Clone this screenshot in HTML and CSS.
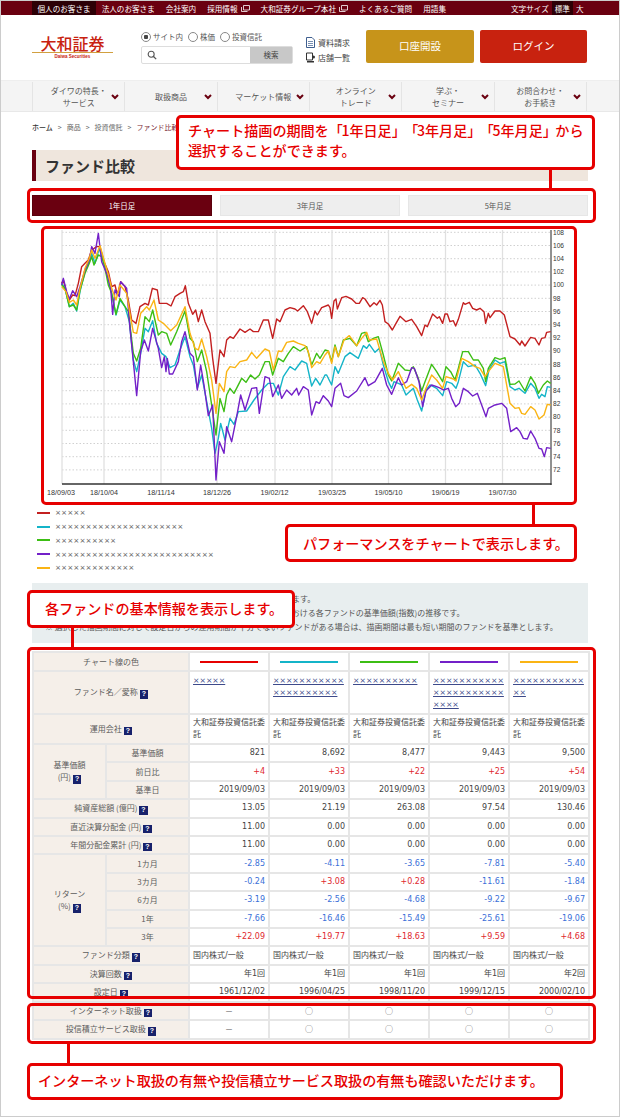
FILE: index.html
```html
<!DOCTYPE html>
<html lang="ja">
<head>
<meta charset="utf-8">
<title>ファンド比較</title>
<link rel="stylesheet" href="styles.css">
</head>
<body>
<div class="page">
  <div class="topbar">
    <span class="tb current">個人のお客さま</span>
    <span class="tb">法人のお客さま</span>
    <span class="tb">会社案内</span>
    <span class="tb">採用情報<svg class="ext" viewBox="0 0 9 7"><path d="M2.5 .5h6v4.500h-6zM.5 2v4.500h6" fill="none" stroke="#fff" stroke-width=".8"/></svg></span>
    <span class="tb">大和証券グループ本社<svg class="ext" viewBox="0 0 9 7"><path d="M2.5 .5h6v4.500h-6zM.5 2v4.500h6" fill="none" stroke="#fff" stroke-width=".8"/></svg></span>
    <span class="tb">よくあるご質問</span>
    <span class="tb">用語集</span>
    <span class="tb size-label">文字サイズ</span>
    <span class="size on">標準</span>
    <span class="size">大</span>
  </div>

  <header class="header">
    <div class="logo">
      <div class="logo-jp">大和証券</div>
      <div class="logo-en">Daiwa Securities</div>
    </div>
    <div class="search">
      <div class="radios">
        <span class="radio sel">サイト内</span>
        <span class="radio">株価</span>
        <span class="radio">投資信託</span>
      </div>
      <div class="searchbox">
        <svg class="glass" viewBox="0 0 12 12"><circle cx="5" cy="5" r="3.600" fill="none" stroke="#555" stroke-width="1.300"/><path d="M7.800 7.800L11 11" stroke="#555" stroke-width="1.500"/></svg>
        <span class="searchbtn">検索</span>
      </div>
    </div>
    <div class="hlinks">
      <div class="hlink"><svg class="hicon" viewBox="0 0 9 11"><path d="M.5 .5h5.500l2.500 2.500v7.500h-8z" fill="#fff" stroke="#3f5f8f"/><path d="M2 4.500h5M2 6.500h5M2 8.500h5" stroke="#3f5f8f" stroke-width=".7"/></svg>資料請求</div>
      <div class="hlink"><svg class="hicon" viewBox="0 0 9 11"><path d="M.5 1h6v7h-6z" fill="#fff" stroke="#333"/><circle cx="7.500" cy="5" r="1.500" fill="#333"/><path d="M1 9h7v1.500h-7z" fill="#333"/></svg>店舗一覧</div>
    </div>
    <div class="hbtn gold">口座開設</div>
    <div class="hbtn red">ログイン</div>
  </header>

  <nav class="nav">
    <div class="navitem"><span class="navtext">ダイワの特長・<br>サービス</span><svg class="chev" viewBox="0 0 8 6"><path d="M1 1l3 3 3-3" fill="none" stroke="#6a0010" stroke-width="2"/></svg></div>
    <div class="navitem"><span class="navtext">取扱商品</span><svg class="chev" viewBox="0 0 8 6"><path d="M1 1l3 3 3-3" fill="none" stroke="#6a0010" stroke-width="2"/></svg></div>
    <div class="navitem"><span class="navtext">マーケット情報</span><svg class="chev" viewBox="0 0 8 6"><path d="M1 1l3 3 3-3" fill="none" stroke="#6a0010" stroke-width="2"/></svg></div>
    <div class="navitem"><span class="navtext">オンライン<br>トレード</span><svg class="chev" viewBox="0 0 8 6"><path d="M1 1l3 3 3-3" fill="none" stroke="#6a0010" stroke-width="2"/></svg></div>
    <div class="navitem"><span class="navtext">学ぶ・<br>セミナー</span><svg class="chev" viewBox="0 0 8 6"><path d="M1 1l3 3 3-3" fill="none" stroke="#6a0010" stroke-width="2"/></svg></div>
    <div class="navitem"><span class="navtext">お問合わせ・<br>お手続き</span><svg class="chev" viewBox="0 0 8 6"><path d="M1 1l3 3 3-3" fill="none" stroke="#6a0010" stroke-width="2"/></svg></div>
  </nav>

  <main class="main">
    <div class="crumbs">
      <b class="crumb-home">ホーム</b><span>&gt;</span><span>商品</span><span>&gt;</span><span>投資信託</span><span>&gt;</span><span class="crumb-last">ファンド比較</span>
    </div>
    <h1 class="title">ファンド比較</h1>
    <div class="tabs">
      <div class="tab active">1年日足</div>
      <div class="tab">3年月足</div>
      <div class="tab">5年月足</div>
    </div>

    <svg class="chart" viewBox="44 228 530 272" width="530" height="272">
      <g class="hgrid">
        <path d="M62 232.300H551M62 245.500H551M62 258.700H551M62 271.900H551M62 285.100H551M62 298.300H551M62 311.500H551M62 324.700H551M62 337.900H551M62 351.100H551M62 364.300H551M62 377.500H551M62 390.700H551M62 403.900H551M62 417.100H551M62 430.300H551M62 443.500H551M62 456.700H551M62 469.900H551"/>
      </g>
      <g class="vgrid">
        <path d="M62 230V484M104 230V484M161 230V484M217 230V484M275 230V484M332 230V484M388.500 230V484M445.500 230V484M502.500 230V484"/>
      </g>
      <path class="axis" d="M62 484H551.500"/>
      <path class="axis-r" d="M551 230V485"/>
      <g class="xl">
        <text x="61" y="495">18/09/03</text><text x="104" y="495">18/10/04</text><text x="161" y="495">18/11/14</text><text x="217" y="495">18/12/26</text><text x="274.500" y="495">19/02/12</text><text x="332" y="495">19/03/25</text><text x="388.500" y="495">19/05/10</text><text x="445.500" y="495">19/06/19</text><text x="502.500" y="495">19/07/30</text>
      </g>
      <g class="yl">
        <text x="553" y="234.500">108</text><text x="553" y="247.700">106</text><text x="553" y="260.900">104</text><text x="553" y="274.100">102</text><text x="553" y="287.300">100</text><text x="553" y="300.500">98</text><text x="553" y="313.700">96</text><text x="553" y="326.900">94</text><text x="553" y="340.100">92</text><text x="553" y="353.300">90</text><text x="553" y="366.500">88</text><text x="553" y="379.700">86</text><text x="553" y="392.900">84</text><text x="553" y="406.100">82</text><text x="553" y="419.300">80</text><text x="553" y="432.500">78</text><text x="553" y="445.700">76</text><text x="553" y="458.900">74</text><text x="553" y="472.100">72</text>
      </g>
      <g class="lines" transform="translate(30 225) scale(.33333)">
        <polyline class="l-red" points="95,175 100,165 110,205 118,225 128,210 135,212 145,175 155,125 165,115 175,105 185,75 200,65 210,65 222,110 235,140 245,185 255,180 262,210 272,170 285,185 295,225 305,285 318,295 330,245 345,235 355,240 367,190 382,195 388,235 410,235 423,243 435,215 450,205 460,200 466,182 475,235 488,268 497,255 505,290 515,255 525,290 540,325 548,400 558,475 570,375 582,395 590,345 600,335 610,340 630,312 645,322 660,312 670,320 685,320 700,285 715,285 728,340 740,282 750,290 765,255 780,248 795,252 803,258 820,242 832,260 845,295 855,258 862,270 875,248 895,240 900,248 905,280 912,228 918,222 922,252 935,218 948,214 965,222 978,235 988,235 998,218 1005,222 1020,245 1032,233 1040,240 1050,226 1057,240 1065,290 1075,297 1087,315 1098,295 1110,274 1128,290 1145,283 1160,305 1175,332 1185,300 1192,305 1208,267 1222,280 1228,275 1238,295 1245,267 1252,267 1260,290 1270,287 1277,303 1285,283 1300,233 1305,238 1318,232 1328,250 1340,255 1350,250 1362,260 1367,295 1375,265 1380,278 1395,258 1410,258 1423,270 1440,335 1455,342 1470,360 1475,348 1485,363 1502,337 1515,340 1527,360 1535,340 1545,338 1550,322 1562,320"/>
        <polyline class="l-cyan" points="95,175 105,190 118,245 130,235 140,258 150,200 165,140 178,110 185,85 195,115 208,70 222,115 235,165 245,205 258,270 270,225 285,245 298,290 310,405 320,440 332,385 345,310 355,320 368,287 380,355 395,385 408,395 420,428 435,420 450,375 465,335 480,395 490,420 502,490 515,450 530,530 545,610 555,685 565,640 572,595 585,645 600,580 612,598 625,560 650,558 672,525 695,495 715,475 730,475 745,510 760,455 780,425 795,435 815,408 830,415 845,483 857,460 870,480 885,450 890,450 905,480 915,425 925,445 945,395 960,383 985,400 1000,362 1010,370 1018,358 1035,382 1048,370 1060,420 1075,470 1085,490 1092,470 1105,475 1115,480 1128,510 1150,490 1162,525 1175,558 1188,495 1200,480 1220,490 1238,512 1250,470 1265,475 1278,490 1285,470 1300,410 1315,425 1335,420 1350,445 1367,482 1377,435 1395,405 1410,415 1425,410 1440,485 1455,495 1467,490 1485,505 1502,475 1515,490 1527,520 1535,508 1545,515 1552,485 1562,487"/>
        <polyline class="l-green" points="95,180 105,190 118,245 130,240 140,255 150,195 165,145 178,115 185,95 192,120 205,90 215,95 225,130 235,180 245,205 258,268 270,220 285,245 295,260 310,385 320,408 332,370 345,275 358,290 368,255 385,330 395,320 410,325 422,360 440,320 465,258 480,340 490,350 502,410 515,375 530,440 545,540 558,630 570,520 582,560 590,510 600,490 612,505 635,460 648,472 662,450 675,462 688,450 705,410 718,410 728,450 745,400 760,410 775,385 790,365 810,378 830,365 845,420 860,385 870,400 885,375 895,378 905,410 915,360 925,395 940,345 960,340 980,362 995,325 1005,322 1015,350 1030,340 1045,335 1060,390 1075,450 1085,468 1092,450 1105,415 1125,435 1140,437 1150,425 1165,460 1175,498 1185,470 1205,418 1220,440 1238,470 1248,425 1262,440 1275,465 1285,430 1298,380 1315,380 1330,405 1345,405 1360,430 1367,470 1375,430 1395,398 1410,403 1425,398 1440,478 1455,477 1467,468 1485,498 1502,455 1515,475 1525,505 1540,480 1552,468 1562,475"/>
        <polyline class="l-purple" points="95,180 100,160 110,200 118,222 128,197 140,215 150,185 165,135 178,105 185,65 195,85 205,25 215,110 232,150 242,190 248,268 255,195 268,215 272,170 290,190 300,310 310,410 320,512 332,380 343,345 355,378 368,310 385,370 395,428 403,395 408,440 412,400 418,447 428,447 445,410 455,350 465,320 480,385 490,395 502,495 512,420 522,480 535,572 548,540 558,765 568,650 582,685 590,605 605,650 620,575 632,510 645,555 665,490 680,488 688,565 705,455 718,460 728,515 745,480 755,520 770,495 785,510 800,490 806,510 820,485 835,495 845,570 858,530 868,535 880,512 895,528 905,545 915,490 932,475 942,512 955,518 980,498 1005,458 1015,482 1035,470 1057,430 1070,480 1085,508 1105,458 1115,480 1130,470 1145,428 1153,430 1167,470 1178,545 1188,498 1205,480 1220,485 1232,490 1240,495 1255,490 1265,520 1277,545 1288,535 1300,490 1315,500 1328,513 1342,505 1355,540 1368,575 1375,550 1395,540 1415,535 1430,550 1442,620 1460,608 1470,620 1480,640 1492,642 1502,618 1515,640 1527,670 1535,672 1543,695 1550,668 1562,670"/>
        <polyline class="l-yellow" points="95,185 108,200 118,232 130,225 140,240 150,190 165,130 178,100 185,75 195,100 210,62 222,105 235,150 245,190 258,225 270,180 290,205 297,250 310,322 320,325 332,265 350,245 358,255 372,225 385,285 400,295 422,317 440,300 465,245 480,325 495,370 505,375 515,342 530,395 545,465 558,565 568,475 582,500 590,440 600,425 615,428 630,410 650,405 665,382 680,400 705,372 718,378 730,435 745,378 755,380 770,352 790,348 805,355 825,362 835,380 845,428 860,410 870,415 885,390 895,378 905,415 915,365 925,395 942,345 958,332 980,362 995,340 1010,322 1018,345 1040,342 1060,410 1075,445 1088,465 1105,440 1128,490 1145,478 1160,490 1175,525 1188,490 1205,450 1220,465 1238,490 1248,455 1270,462 1278,468 1295,400 1315,410 1335,425 1350,430 1365,455 1375,440 1395,415 1420,425 1440,535 1455,550 1467,548 1475,565 1485,568 1502,545 1515,555 1527,582 1542,570 1552,538 1562,540"/>
      </g>
    </svg>

    <ul class="legend">
      <li class="lg lg-red">×××××</li>
      <li class="lg lg-cyan">×××××××××××××××××××××</li>
      <li class="lg lg-green">××××××××××</li>
      <li class="lg lg-purple">××××××××××××××××××××××××××</li>
      <li class="lg lg-yellow">×××××××××××××</li>
    </ul>

    <div class="info">
      <p>※ チャートの期間は「1年日足」「3年月足」「5年月足」から選択できます。</p>
      <p>※ チャートは、選択した期間の初日を100として指数化した各期間における各ファンドの基準価額(指数)の推移です。</p>
      <p>※ 選択した描画期間に対して設定日からの運用期間が十分でないファンドがある場合は、描画期間は最も短い期間のファンドを基準とします。</p>
    </div>

    <table class="cmp">
      <colgroup><col class="c1"><col class="c2"><col class="cv"><col class="cv"><col class="cv"><col class="cv"><col class="cv"></colgroup>
      <tr class="r19"><th colspan="2">チャート線の色</th><td><i class="sw s-red"></i></td><td><i class="sw s-cyan"></i></td><td><i class="sw s-green"></i></td><td><i class="sw s-purple"></i></td><td><i class="sw s-yellow"></i></td></tr>
      <tr class="r43"><th colspan="2">ファンド名／愛称 <i class="q">?</i></th><td class="name"><a href="#">×××××</a></td><td class="name"><a href="#">×××××××××××××××××××××</a></td><td class="name"><a href="#">××××××××××</a></td><td class="name"><a href="#">××××××××××××××××××××××××××</a></td><td class="name"><a href="#">×××××××××××××</a></td></tr>
      <tr class="r30"><th colspan="2">運用会社 <i class="q">?</i></th><td>大和証券投資信託委託</td><td>大和証券投資信託委託</td><td>大和証券投資信託委託</td><td>大和証券投資信託委託</td><td>大和証券投資信託委託</td></tr>
      <tr class="r"><th rowspan="3">基準価額<br>(円) <i class="q">?</i></th><th>基準価額</th><td class="n">821</td><td class="n">8,692</td><td class="n">8,477</td><td class="n">9,443</td><td class="n">9,500</td></tr>
      <tr class="r"><th>前日比</th><td class="n up">+4</td><td class="n up">+33</td><td class="n up">+22</td><td class="n up">+25</td><td class="n up">+54</td></tr>
      <tr class="r"><th>基準日</th><td class="n">2019/09/03</td><td class="n">2019/09/03</td><td class="n">2019/09/03</td><td class="n">2019/09/03</td><td class="n">2019/09/03</td></tr>
      <tr class="r"><th colspan="2">純資産総額 (億円) <i class="q">?</i></th><td class="n">13.05</td><td class="n">21.19</td><td class="n">263.08</td><td class="n">97.54</td><td class="n">130.46</td></tr>
      <tr class="r"><th colspan="2">直近決算分配金 (円) <i class="q">?</i></th><td class="n">11.00</td><td class="n">0.00</td><td class="n">0.00</td><td class="n">0.00</td><td class="n">0.00</td></tr>
      <tr class="r"><th colspan="2">年間分配金累計 (円) <i class="q">?</i></th><td class="n">11.00</td><td class="n">0.00</td><td class="n">0.00</td><td class="n">0.00</td><td class="n">0.00</td></tr>
      <tr class="r"><th rowspan="5">リターン<br>(%) <i class="q">?</i></th><th>1カ月</th><td class="n dn">-2.85</td><td class="n dn">-4.11</td><td class="n dn">-3.65</td><td class="n dn">-7.81</td><td class="n dn">-5.40</td></tr>
      <tr class="r"><th>3カ月</th><td class="n dn">-0.24</td><td class="n up">+3.08</td><td class="n up">+0.28</td><td class="n dn">-11.61</td><td class="n dn">-1.84</td></tr>
      <tr class="r"><th>6カ月</th><td class="n dn">-3.19</td><td class="n dn">-2.56</td><td class="n dn">-4.68</td><td class="n dn">-9.22</td><td class="n dn">-9.67</td></tr>
      <tr class="r"><th>1年</th><td class="n dn">-7.66</td><td class="n dn">-16.46</td><td class="n dn">-15.49</td><td class="n dn">-25.61</td><td class="n dn">-19.06</td></tr>
      <tr class="r"><th>3年</th><td class="n up">+22.09</td><td class="n up">+19.77</td><td class="n up">+18.63</td><td class="n up">+9.59</td><td class="n up">+4.68</td></tr>
      <tr class="r"><th colspan="2">ファンド分類 <i class="q">?</i></th><td>国内株式/一般</td><td>国内株式/一般</td><td>国内株式/一般</td><td>国内株式/一般</td><td>国内株式/一般</td></tr>
      <tr class="r"><th colspan="2">決算回数 <i class="q">?</i></th><td class="n">年1回</td><td class="n">年1回</td><td class="n">年1回</td><td class="n">年1回</td><td class="n">年2回</td></tr>
      <tr class="r"><th colspan="2">設定日 <i class="q">?</i></th><td class="n">1961/12/02</td><td class="n">1996/04/25</td><td class="n">1998/11/20</td><td class="n">1999/12/15</td><td class="n">2000/02/10</td></tr>
      <tr class="r"><th colspan="2">インターネット取扱 <i class="q">?</i></th><td class="c">－</td><td class="c">○</td><td class="c">○</td><td class="c">○</td><td class="c">○</td></tr>
      <tr class="r"><th colspan="2">投信積立サービス取扱 <i class="q">?</i></th><td class="c">－</td><td class="c">○</td><td class="c">○</td><td class="c">○</td><td class="c">○</td></tr>
    </table>
  </main>

  <div class="frame f-tabs"></div>
  <div class="frame f-chart"></div>
  <div class="frame f-table"></div>
  <div class="frame f-flags"></div>
  <i class="link k1"></i>
  <i class="link k2"></i>
  <i class="link k3"></i>
  <i class="link k4"></i>
  <div class="callout c-period">チャート描画の期間を<span class="hw">「</span>1年日足<span class="hw">」「</span>3年月足<span class="hw">」「</span>5年月足<span class="hw">」</span>から<br>選択することができます。</div>
  <div class="callout c-perf">パフォーマンスをチャートで表示します。</div>
  <div class="callout c-basic">各ファンドの基本情報を表示します。</div>
  <div class="callout c-flags">インターネット取扱の有無や投信積立サービス取扱の有無も確認いただけます。</div>
</div>
</body>
</html>
```
FILE: styles.css
```css
* { box-sizing: border-box; }
html, body { margin: 0; padding: 0; background: #fff; }
body { font-family: "DejaVu Sans", "Noto Sans CJK JP", sans-serif; font-size: 8px; color: #444; }
.page { position: relative; width: 620px; height: 1117px; border: 1px solid #ccc; overflow: hidden; }
p, ul, h1 { margin: 0; padding: 0; }

/* top bar */
.topbar { display: flex; align-items: center; height: 14px; padding-left: 31px; background: #6a0010; color: #fff; font-family: "Noto Sans CJK JP", sans-serif; font-size: 7.600px; }
.tb { display: flex; align-items: center; padding: 0 5.500px; height: 14px; white-space: nowrap; }
.tb.current { background: #2c0006; margin-right: 0; }
.ext { width: 9px; height: 7px; margin-left: 3px; }
.size-label { margin-left: 54px; padding-right: 3px; }
.size { display: flex; align-items: center; height: 14px; padding: 0 3px; }
.size.on { background: #2c0006; padding: 0 3px; }

/* header */
.header { display: flex; align-items: flex-start; height: 65px; padding: 15px 31px 0; }
.logo { width: 81px; margin-top: 5px; text-align: center; font-family: "Noto Sans CJK JP", sans-serif; color: #c8220f; }
.logo-jp { font-size: 16px; line-height: 17px; height: 17px; border-bottom: 0; font-weight: 500; }
.logo-en { margin-top: 0; padding-top: 1px; border-top: 1px solid #d2a040; font-size: 4.500px; line-height: 6px; font-weight: 700; font-family: "Liberation Sans", sans-serif; }
.search { width: 152px; margin-left: 28px; }
.radios { display: flex; gap: 5px; height: 16px; font-family: "Noto Sans CJK JP", sans-serif; font-size: 7.500px; line-height: 14px; color: #555; }
.radio { display: flex; align-items: center; height: 14px; }
.radio::before { content: ""; width: 8px; height: 8px; margin-right: 2px; border: 1px solid #888; border-radius: 50%; background: #fff; }
.radio.sel::before { background: radial-gradient(circle, #444 0 2px, #fff 2.500px); }
.searchbox { display: flex; align-items: center; justify-content: space-between; height: 18px; margin-top: 0; padding-left: 5px; background: #fff; border: 1px solid #ddd; border-radius: 2px; }
.glass { width: 10px; height: 10px; }
.searchbtn { width: 42px; height: 16px; line-height: 16px; text-align: center; background: #c8c8c8; color: #444; font-family: "Noto Sans CJK JP", sans-serif; font-size: 7.500px; }
.hlinks { width: 60px; margin-left: 13px; padding-top: 5px; font-family: "Noto Sans CJK JP", sans-serif; font-size: 8px; color: #444; }
.hlink { display: flex; align-items: center; height: 15px; }
.hicon { width: 9px; height: 11px; margin-right: 3px; }
.hbtn { height: 33px; line-height: 32px; border-radius: 2px; text-align: center; color: #fff; font-family: "Noto Sans CJK JP", sans-serif; font-size: 10.500px; }
.hbtn.gold { width: 108px; background: #c7941a; }
.hbtn.red { width: 107px; margin-left: 6px; background: #c8220f; }

/* navigation */
.nav { display: flex; height: 32px; padding: 1px 32px 0 31px; background: #f4f4f4; border-bottom: 1px solid #e8e8e8; border-top: 1px solid #eee; font-family: "Noto Sans CJK JP", sans-serif; font-size: 8px; line-height: 11.500px; color: #555; }
.navitem { display: flex; flex: 1; align-items: center; padding: 0 5px 0 13px; border-left: 1px solid #e4e4e4; }
.navitem:last-child { border-right: 1px solid #e4e4e4; }
.navtext { flex: 1; text-align: center; }
.chev { width: 8px; height: 6px; }

/* main */
.main { padding: 0 31px; }
.crumbs { display: flex; align-items: center; gap: 5px; height: 30px; font-family: "Noto Sans CJK JP", sans-serif; font-size: 7px; color: #666; }
.crumb-home { color: #333; font-weight: 500; }
.crumb-last { color: #7a2a35; }
.title { height: 31px; margin-top: 8px; padding-left: 9px; background: #efe6dd; border-left: 4px solid #6a0010; font-family: "Noto Sans CJK JP", sans-serif; font-size: 15px; line-height: 31px; font-weight: 700; color: #333; }
.tabs { display: flex; gap: 8px; height: 21px; margin-top: 14px; }
.tab { flex: 1; line-height: 19px; text-align: center; background: #eee; border: 1px solid #e6e6e6; color: #555; font-family: "Noto Sans CJK JP", sans-serif; font-size: 7.500px; }
.tab.active { background: #6a0010; border-color: #5a000c; color: #fff; }

/* chart */
.chart { display: block; margin: 12px 0 0 12px; }
.hgrid path { fill: none; stroke: #d0d0d0; stroke-width: 1; stroke-dasharray: 1.500 2; }
.vgrid path { fill: none; stroke: #e0e0e0; stroke-width: 1.300; }
.axis { fill: none; stroke: #333; stroke-width: 1.500; }
.axis-r { fill: none; stroke: #222; stroke-width: 1; }
.xl text { font-family: "Liberation Sans", sans-serif; font-size: 7.200px; fill: #333; text-anchor: middle; }
.yl text { font-family: "Liberation Sans", sans-serif; font-size: 6.600px; fill: #333; }
.lines polyline { fill: none; stroke-width: 4.200; stroke-linejoin: round; }
.l-red { stroke: #c32020; }
.l-cyan { stroke: #14b4c8; }
.l-green { stroke: #3cbe14; }
.l-purple { stroke: #7320c8; }
.l-yellow { stroke: #fab414; }

/* legend */
.legend { height: 69px; margin: 6px 0 8px; padding-left: 5px; list-style: none; font-family: "DejaVu Sans", sans-serif; font-size: 7.300px; color: #666; }
.lg { display: flex; align-items: center; height: 13.750px; white-space: nowrap; }
.lg::before { content: ""; width: 13px; height: 2px; margin-right: 5px; background: currentColor; }
.lg-red::before { background: #c32020; }
.lg-cyan::before { background: #14b4c8; }
.lg-green::before { background: #3cbe14; }
.lg-purple::before { background: #7320c8; }
.lg-yellow::before { background: #fab414; }

/* info box */
.info { height: 60px; padding: 9px 0 0 13px; background: #e8eeef; font-family: "Noto Sans CJK JP", sans-serif; font-size: 8px; line-height: 14px; color: #555; white-space: nowrap; }

/* table */
.cmp { width: 556px; margin-top: 8px; border-collapse: collapse; table-layout: fixed; font-size: 8px; line-height: 12px; }
.c1 { width: 73px; }
.c2 { width: 83px; }
.cv { width: 80px; }
.cmp th, .cmp td { border: 2px solid #e6e6e6; padding: 0 3px; }
.cmp th { background: #f5efe9; font-weight: 400; color: #5c5c5c; font-family: "Noto Sans CJK JP", sans-serif; font-size: 8px; }
.cmp td { color: #444; word-break: break-all; background: #fff; font-family: "DejaVu Sans", "Noto Sans CJK JP", sans-serif; }
.r19 > * { height: 19px; }
.r43 > * { height: 43px; }
.r30 > * { height: 30px; }
.r > * { height: 18.420px; }
.cmp .name { vertical-align: top; padding-top: 3px; }
.name a { color: #3d4a8a; font-size: 7.700px; }
.cmp .n { text-align: right; }
.cmp .up { color: #e0282e; }
.cmp .dn { color: #3a6fd8; }
.cmp .c { text-align: center; color: #666; font-family: "Noto Sans CJK JP", sans-serif; }
.sw { display: block; height: 2px; margin: 0 7px; }
.s-red { background: #e60000; }
.s-cyan { background: #14b4c8; }
.s-green { background: #3cbe14; }
.s-purple { background: #7320c8; }
.s-yellow { background: #fab414; }
.q { display: inline-block; width: 8.500px; height: 8.500px; vertical-align: -1px; background: #17216b; color: #fff; font: 700 7px/8.500px "Liberation Sans", sans-serif; text-align: center; }

/* annotation overlays */
.frame, .callout { position: absolute; border: 3px solid #e60000; border-radius: 5px; }
.frame { left: 26px; width: 569px; }
.f-tabs { top: 187px; height: 35px; }
.f-chart { left: 40px; width: 536px; top: 225px; height: 279px; }
.f-table { top: 646px; height: 352px; }
.f-flags { top: 1002px; height: 41px; }
.link { position: absolute; width: 3px; background: #e60000; }
.k1 { left: 548px; top: 167px; height: 21px; }
.k2 { left: 531px; top: 503px; height: 21px; }
.k3 { left: 70px; top: 626px; height: 21px; }
.k4 { left: 66px; top: 1042px; height: 21px; }
.callout { background: #fff; color: #e60000; font-family: "Noto Sans CJK JP", sans-serif; font-size: 14.100px; font-weight: 500; line-height: 20px; white-space: nowrap; text-spacing-trim: space-all; }
.c-period { left: 175px; top: 114px; width: 419px; height: 55px; padding: 2px 0 0 9px; }
.hw { letter-spacing: -1.500px; }
.c-perf { left: 284px; top: 523px; width: 292px; height: 38px; padding: 6px 0 0 15px; }
.c-basic { left: 26px; top: 589px; width: 268px; height: 38px; padding: 5px 0 0 15px; }
.c-flags { left: 26px; top: 1062px; width: 536px; height: 37px; padding: 4px 0 0 8px; }
```
